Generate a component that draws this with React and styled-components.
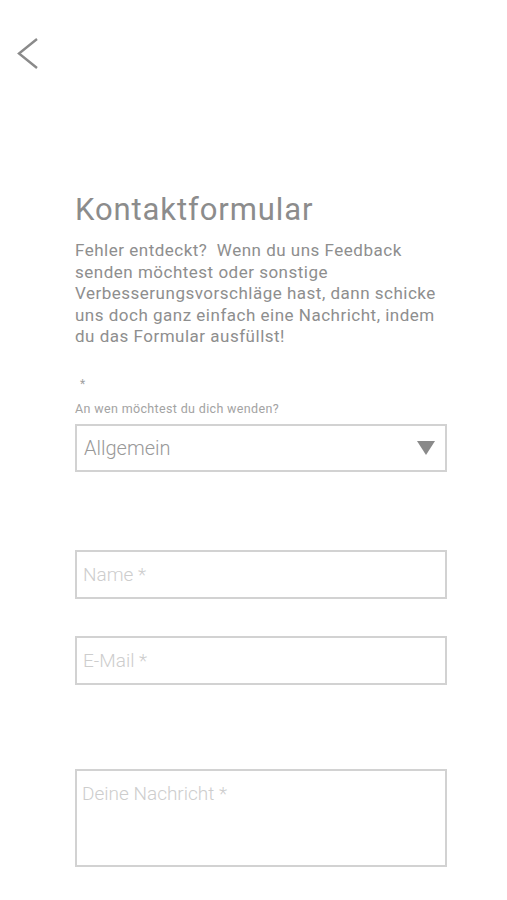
import styled, { createGlobalStyle } from 'styled-components';

const GlobalStyle = createGlobalStyle`
  html, body {
    margin: 0;
    padding: 0;
    background: #ffffff;
    font-family: Roboto, "Noto Sans", Arial, sans-serif;
  }
`;

const Page = styled.div`
  width: 507px;
  min-height: 900px;
  box-sizing: border-box;
  padding-top: 38px;
`;

const BackButton = styled.button`
  display: block;
  margin-left: 17px;
  padding: 0;
  border: none;
  background: none;
  cursor: pointer;
  line-height: 0;
`;

const Content = styled.div`
  margin: 122px 0 0 75px;
  width: 372px;
`;

const Title = styled.h1`
  margin: 0;
  font-size: 31px;
  line-height: 36px;
  font-weight: 400;
  letter-spacing: 0.9px;
  color: #8c8c8c;
`;

const Intro = styled.p`
  margin: 12px 0 0 0;
  font-size: 17px;
  line-height: 21.5px;
  letter-spacing: 0.5px;
  color: #8e8e8e;
`;

const Required = styled.div`
  margin: 29px 0 0 5px;
  font-size: 12px;
  line-height: 14px;
  color: #a0a0a0;
`;

const Label = styled.div`
  margin-top: 11px;
  font-size: 12.5px;
  line-height: 14px;
  letter-spacing: 0.35px;
  color: #a3a3a3;
`;

const Select = styled.div`
  margin-top: 8px;
  height: 48px;
  box-sizing: border-box;
  border: 2px solid #d2d2d2;
  display: flex;
  align-items: center;
  justify-content: space-between;
  padding: 0 10px 0 7px;
  font-size: 20px;
  font-weight: 300;
  color: #999999;
  cursor: pointer;
`;

const Field = styled.input`
  display: block;
  margin-top: ${({ $gap }) => $gap}px;
  width: 100%;
  height: 49px;
  box-sizing: border-box;
  border: 2px solid #d2d2d2;
  border-radius: 0;
  padding: 0 6px;
  font-family: Roboto, "Noto Sans", Arial, sans-serif;
  font-size: 19px;
  font-weight: 300;
  color: #777;
  outline: none;

  &::placeholder {
    color: #cdcdcd;
  }
`;

const Message = styled.textarea`
  display: block;
  margin-top: 84px;
  width: 100%;
  height: 98px;
  box-sizing: border-box;
  border: 2px solid #d2d2d2;
  border-radius: 0;
  padding: 12px 5px;
  font-family: Roboto, "Noto Sans", Arial, sans-serif;
  font-size: 19px;
  line-height: 22px;
  font-weight: 300;
  color: #777;
  resize: none;
  outline: none;

  &::placeholder {
    color: #cdcdcd;
  }
`;

const Chevron = () => (
  <svg width="24" height="32" viewBox="0 0 24 32">
    <polyline points="20,1 2,15.5 20,30" fill="none" stroke="#8a8a8a" strokeWidth="2.4" />
  </svg>
);

const Triangle = () => (
  <svg width="18" height="14" viewBox="0 0 18 14">
    <polygon points="0,0 18,0 9,14" fill="#8a8a8a" />
  </svg>
);

export default function App() {
  return (
    <Page>
      <GlobalStyle />
      <BackButton aria-label="Zurück">
        <Chevron />
      </BackButton>
      <Content>
        <Title>Kontaktformular</Title>
        <Intro>
          Fehler entdeckt?&nbsp; Wenn du uns Feedback<br />
          senden möchtest oder sonstige<br />
          Verbesserungsvorschläge hast, dann schicke<br />
          uns doch ganz einfach eine Nachricht, indem<br />
          du das Formular ausfüllst!
        </Intro>
        <Required>*</Required>
        <Label>An wen möchtest du dich wenden?</Label>
        <Select>
          <span>Allgemein</span>
          <Triangle />
        </Select>
        <Field $gap={78} placeholder="Name *" />
        <Field $gap={37} placeholder="E-Mail *" />
        <Message placeholder="Deine Nachricht *" />
      </Content>
    </Page>
  );
}
